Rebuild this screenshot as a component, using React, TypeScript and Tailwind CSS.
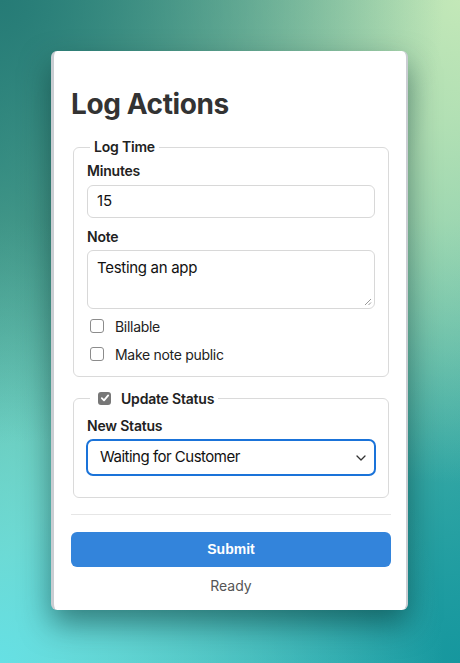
import React from 'react';

const bg =
  'bg-[radial-gradient(circle_at_0%_0%,#267b76_0%,transparent_55%),radial-gradient(circle_at_100%_0%,#c3e8b8_0%,transparent_60%),radial-gradient(circle_at_0%_100%,#66e0e4_0%,transparent_55%),radial-gradient(circle_at_100%_100%,#16979e_0%,transparent_55%),linear-gradient(135deg,#3f9e8e,#7fc8a8_50%,#3cb0ad)]';

const Box = ({ checked }: { checked?: boolean }) =>
  checked ? (
    <span className="w-[13px] h-[13px] rounded-[3px] bg-[#777] flex items-center justify-center shrink-0">
      <svg width="10" height="10" viewBox="0 0 10 10">
        <path d="M1.8 5.2 L4 7.4 L8.2 2.4" fill="none" stroke="#fff" strokeWidth="1.8" strokeLinecap="round" strokeLinejoin="round" />
      </svg>
    </span>
  ) : (
    <span className="w-[14px] h-[14px] rounded-[3px] border border-[#8c8c8c] bg-white shrink-0" />
  );

export default function App() {
  return (
    <div className={`w-[460px] h-[663px] overflow-hidden pt-[51px] pl-[51px] ${bg}`} style={{ fontFamily: 'Inter, "Noto Sans", sans-serif' }}>
      <div className="w-[357px] h-[559px] rounded-[6px] bg-white border-l-[3px] border-r-[2px] border-[#c9cdd2] shadow-[0_14px_30px_rgba(0,40,40,0.5)] pt-[35px] pl-[17px] pr-[15px] flex flex-col">
        <h1 className="text-[28px] leading-[36px] font-bold text-[#333] tracking-[-0.4px]">Log Actions</h1>

        {/* Log Time */}
        <fieldset className="mt-[15px] mx-[2px] border border-[#dadada] rounded-[6px] px-[13px] pb-[12px]">
          <legend className="ml-[3px] px-[4px] text-[14px] leading-[20px] font-semibold text-[#222] tracking-[-0.2px]">Log Time</legend>
          <label className="block mt-[4px] text-[14px] leading-[20px] font-semibold text-[#222] tracking-[-0.2px]">Minutes</label>
          <div className="mt-[4px] h-[33px] border border-[#d8d8d8] rounded-[6px] px-[9px] flex items-center text-[15px] text-[#111]">15</div>
          <label className="block mt-[9px] text-[14px] leading-[20px] font-semibold text-[#222] tracking-[-0.2px]">Note</label>
          <div className="relative mt-[3px] h-[59px] border border-[#d8d8d8] rounded-[6px] px-[9px] pt-[7px] text-[15px] leading-[20px] text-[#111] tracking-[-0.3px]">
            Testing an app
            <svg className="absolute right-[2px] bottom-[2px]" width="8" height="8" viewBox="0 0 8 8">
              <path d="M7 1 L1 7 M7 4.5 L4.5 7" stroke="#999" strokeWidth="1" />
            </svg>
          </div>
          <div className="mt-[7px] h-[20px] flex items-center pl-[3px] gap-[11px] text-[14px] text-[#222] tracking-[-0.3px]">
            <Box />
            <span>Billable</span>
          </div>
          <div className="mt-[8px] h-[20px] flex items-center pl-[3px] gap-[11px] text-[14px] text-[#222] tracking-[-0.3px]">
            <Box />
            <span>Make note public</span>
          </div>
        </fieldset>

        {/* Update Status */}
        <fieldset className="mt-[11px] mx-[2px] border border-[#dadada] rounded-[6px] px-[13px] pb-[21px]">
          <legend className="ml-[3px] px-[4px] h-[20px]">
            <span className="flex items-center h-[20px] pl-[4px] gap-[10px] text-[14px] font-semibold text-[#222] tracking-[-0.2px]">
              <Box checked />
              <span>Update Status</span>
            </span>
          </legend>
          <label className="block mt-[8px] text-[14px] leading-[20px] font-semibold text-[#222] tracking-[-0.2px]">New Status</label>
          <div className="mt-[3px] -mx-[1px] h-[37px] border-2 border-[#1a73d9] rounded-[7px] pl-[12px] pr-[8px] flex items-center justify-between text-[15px] text-[#111] tracking-[-0.5px]">
            <span>Waiting for Customer</span>
            <svg width="10" height="6" viewBox="0 0 10 6">
              <path d="M1 1 L5 5 L9 1" fill="none" stroke="#333" strokeWidth="1.3" strokeLinecap="round" strokeLinejoin="round" />
            </svg>
          </div>
        </fieldset>

        <div className="mt-[16px] h-px bg-[#e6e6e6]" />

        <button className="mt-[17px] h-[35px] rounded-[6px] bg-[#3384db] text-white text-[14px] font-bold" style={{ fontFamily: '"Liberation Sans", Arial, sans-serif' }}>
          Submit
        </button>
        <div className="mt-[9px] text-center text-[14px] leading-[20px] text-[#555]">Ready</div>
      </div>
    </div>
  );
}
